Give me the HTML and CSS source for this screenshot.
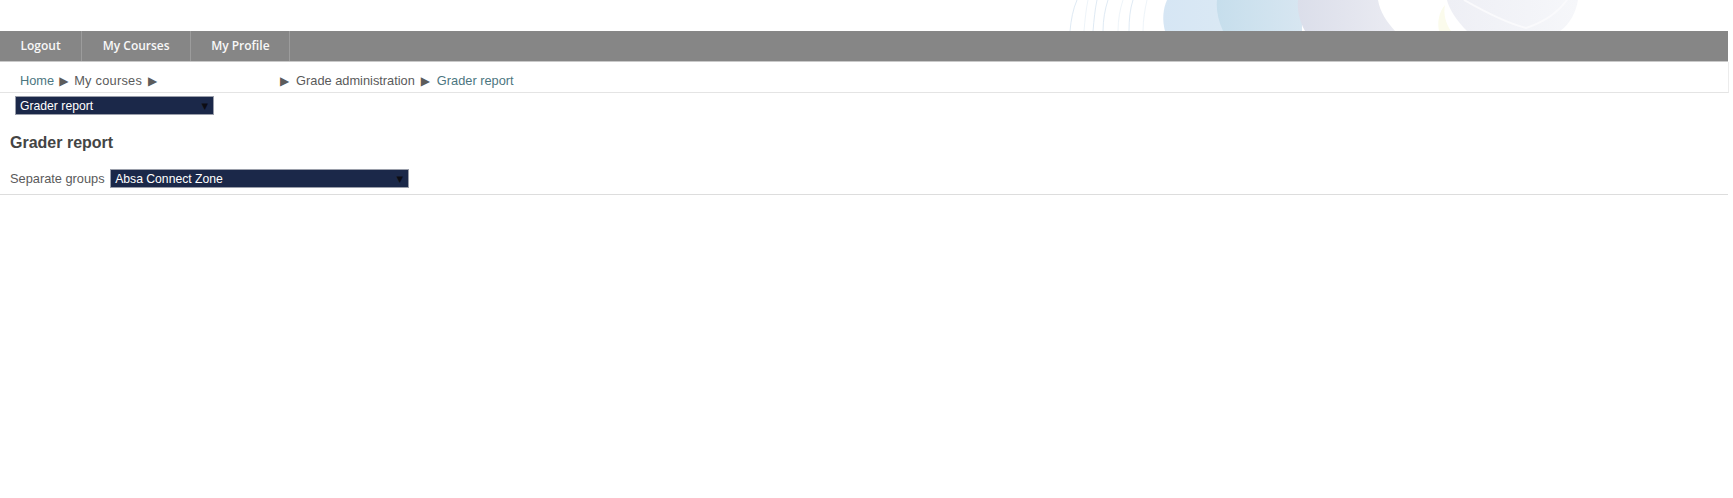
FILE: index.html
```html
<!DOCTYPE html>
<html lang="en">
<head>
<meta charset="utf-8">
<title>Grader report</title>
<link rel="stylesheet" href="styles.css">
</head>
<body>
<div class="page">
  <header class="banner">
    <svg class="art" width="693" height="31" viewBox="0 0 693 31" aria-hidden="true">
      <defs>
        <linearGradient id="a" x1="0" x2="1" y1="0" y2="0"><stop offset="0" stop-color="#d6e6f4"/><stop offset="1" stop-color="#dbe9f4"/></linearGradient>
        <linearGradient id="b" x1="0" x2="1" y1="0" y2="0"><stop offset="0" stop-color="#c6deec"/><stop offset="1" stop-color="#d7e6f1"/></linearGradient>
        <linearGradient id="c" x1="0" x2="1" y1="0" y2="0"><stop offset="0" stop-color="#dbdeea"/><stop offset="1" stop-color="#eaebf2"/></linearGradient>
        <linearGradient id="d" x1="0" x2="1" y1="0" y2="0"><stop offset="0" stop-color="#eeeff5"/><stop offset="1" stop-color="#f6f7fa"/></linearGradient>
      </defs>
      <path d="M30 31C31 20 33 9 37 0M53 31C54 20 55 9 57 0M63 31C63 20 65 9 68 0M89 31C89 20 90 9 93 0" fill="none" stroke="#dfeaf4" stroke-width="1"/>
      <path d="M44 31C45 20 46 9 48 0M78 31C78 20 80 9 83 0M103 31C103 20 105 9 107 0" fill="none" stroke="#eef4f9" stroke-width="1"/>
      <path d="M125 31C122 20 123 9 127 0H200V31Z" fill="url(#a)"/>
      <path d="M183 31C178 20 176 9 177 0H262V31Z" fill="url(#b)"/>
      <path d="M265 31C259 20 257 9 258 0H338C340 12 347 22 355 31Z" fill="url(#c)"/>
      <path d="M399 31C397 22 399 12 405 5C403 14 406 24 411 31Z" fill="#fbfbec"/>
      <path d="M427 31C416 20 409 9 407 0H538C536 12 530 24 520 31Z" fill="url(#d)"/>
      <path d="M424 0C445 12 470 24 486 28C505 22 518 12 527 0" fill="none" stroke="#fafafc" stroke-width="2"/>
    </svg>
  </header>
  <nav class="menu">
    <a class="menu-item" href="#">Logout</a>
    <a class="menu-item" href="#">My Courses</a>
    <a class="menu-item" href="#">My Profile</a>
  </nav>
  <div class="crumbs">
    <a class="link" href="#">Home</a><span class="sep sep-first">▶</span>
    <span class="spaced">My courses</span><span class="sep">▶</span>
    <span class="gap"></span><span class="sep">▶</span>
    <span>Grade administration</span><span class="sep">▶</span>
    <a class="link" href="#">Grader report</a>
  </div>
  <div class="jump">
    <div class="fake-select jump-select"><span>Grader report</span><span class="arrow">▼</span></div>
  </div>
  <h2 class="title">Grader report</h2>
  <div class="groups">
    <span>Separate groups</span>
    <div class="fake-select group-select"><span>Absa Connect Zone</span><span class="arrow">▼</span></div>
  </div>
</div>
</body>
</html>
```
FILE: styles.css
```css
* { box-sizing: border-box; }
html, body { margin: 0; background: #fff; }
body {
  font-family: "Liberation Sans", Arial, sans-serif;
  font-size: 12px;
  color: #5a5a5a;
  height: 498px;
  overflow: hidden;
}
.page {
  width: 1728px;
  height: 195px;
  border-bottom: 1px solid #ddd;
}
.banner {
  height: 31px;
  margin-right: -5px;
  display: flex;
  justify-content: flex-end;
}
.art { display: block; flex: none; }
.menu {
  height: 31px;
  display: flex;
  background: #868686;
  border-bottom: 1px solid #c9c9c9;
}
.menu-item {
  display: flex;
  align-items: center;
  padding: 0 20.5px 1px;
  border-right: 1px solid #9c9c9c;
  font-family: "Open Sans", sans-serif;
  font-size: 12px;
  font-weight: 600;
  color: #f8f8f8;
  text-decoration: none;
}
.menu-item:last-child { padding-right: 19.5px; padding-left: 20px; }
.crumbs {
  height: 31px;
  padding: 7px 0 0 20px;
  display: flex;
  align-items: center;
  border-bottom: 1px solid #e4e4e4;
  border-right: 1px solid #ececec;
  margin-right: -1px;
  font-size: 12.8px;
  white-space: nowrap;
  color: #5a5a5a;
}
.spaced { letter-spacing: 0.25px; }
.link { color: #4c767f; text-decoration: none; }
.sep { margin: 0 6px; font-size: 12px; color: #5c5c5c; width: 10px; font-family: "DejaVu Sans", sans-serif; line-height: 1; }
.sep-first { margin: 0 5px; }
.gap { width: 110px; }
.jump { padding: 3px 0 0 15px; }
.fake-select {
  display: flex;
  justify-content: space-between;
  align-items: center;
  height: 19px;
  padding: 0 4px;
  background: #1b2849;
  border: 1px solid #9a9eaa;
  color: #fff;
  font-size: 12.2px;
}
.arrow { color: #0c0c14; font-size: 8.5px; font-family: "DejaVu Sans", sans-serif; margin-right: 1px; }
.jump-select { width: 199px; }
.group-select { width: 299px; }
.title {
  margin: 18px 0 0 10px;
  font-size: 16px;
  line-height: 20px;
  font-weight: bold;
  color: #444;
}
.groups {
  display: flex;
  align-items: center;
  gap: 5.5px;
  margin: 16px 0 0 10px;
  font-size: 12.8px;
  color: #5a5a5a;
}
```
